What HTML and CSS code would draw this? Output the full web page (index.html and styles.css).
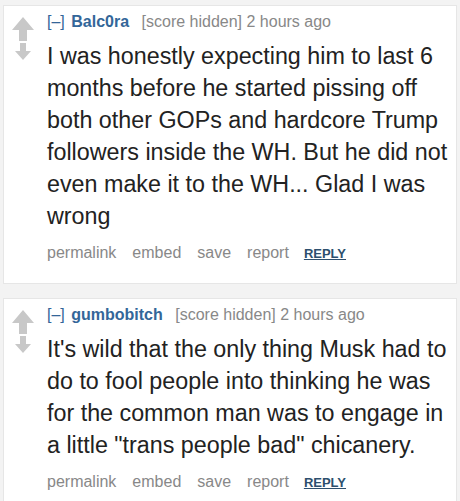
FILE: index.html
```html
<!DOCTYPE html>
<html lang="en">
<head>
  <meta charset="UTF-8" />
  <title>Comments</title>
  <link rel="stylesheet" href="styles.css">
</head>
<body>
  <div class="comment">
    <div class="votes">
      <svg class="up" width="22" height="24" viewBox="0 0 22 24"><path d="M11 0 L22 13 L15 13 L15 24 L7 24 L7 13 L0 13 Z" fill="#c8c8c8"/></svg>
      <svg class="down" width="16" height="17" viewBox="0 0 16 17"><path d="M5 0 L11 0 L11 8 L16 8 L8 17 L0 8 L5 8 Z" fill="#c8c8c8"/></svg>
    </div>
    <div class="entry">
      <p class="tagline">
        <a class="expand">[&ndash;]</a>
        <a class="author">Balc0ra</a>
        <span class="score">[score hidden]</span>
        <span class="time">2 hours ago</span>
      </p>
      <div class="md">I was honestly expecting him to last 6 months before he started pissing off both other GOPs and hardcore Trump followers inside the WH. But he did not even make it to the WH... Glad I was wrong</div>
      <ul class="buttons">
        <li>permalink</li>
        <li>embed</li>
        <li>save</li>
        <li>report</li>
        <li class="reply">REPLY</li>
      </ul>
    </div>
  </div>

  <div class="comment">
    <div class="votes">
      <svg class="up" width="22" height="24" viewBox="0 0 22 24"><path d="M11 0 L22 13 L15 13 L15 24 L7 24 L7 13 L0 13 Z" fill="#c8c8c8"/></svg>
      <svg class="down" width="16" height="17" viewBox="0 0 16 17"><path d="M5 0 L11 0 L11 8 L16 8 L8 17 L0 8 L5 8 Z" fill="#c8c8c8"/></svg>
    </div>
    <div class="entry">
      <p class="tagline">
        <a class="expand">[&ndash;]</a>
        <a class="author">gumbobitch</a>
        <span class="score">[score hidden]</span>
        <span class="time">2 hours ago</span>
      </p>
      <div class="md">It's wild that the only thing Musk had to do to fool people into thinking he was for the common man was to engage in a little "trans people bad" chicanery.</div>
      <ul class="buttons">
        <li>permalink</li>
        <li>embed</li>
        <li>save</li>
        <li>report</li>
        <li class="reply">REPLY</li>
      </ul>
    </div>
  </div>
</body>
</html>
```

FILE: styles.css
```css
body {
  font-family: "Liberation Sans", Arial, sans-serif;
  margin: 0;
  padding: 5px 3px 0;
  background-color: #f3f3f3;
}

.comment {
  display: flex;
  background-color: #fff;
  border: 1px solid #e6e6e6;
  margin-bottom: 14px;
  padding: 7px 0 20px 8px;
}

.votes {
  display: flex;
  flex-direction: column;
  align-items: center;
  width: 22px;
  padding-top: 4px;
}

.votes .down {
  margin-top: 2px;
}

.entry {
  flex: 1;
  padding-left: 13px;
}

.tagline {
  margin: 0;
  font-size: 16px;
  line-height: 18px;
  color: #888;
}

.expand {
  color: #369;
  margin-right: 2px;
}

.author {
  color: #336699;
  font-weight: bold;
  margin-right: 8px;
}

.time {
  color: #888;
}

.md {
  font-size: 23.3px;
  line-height: 32px;
  color: #222;
  margin-top: 9px;
}

.buttons {
  list-style: none;
  margin: 12px 0 0;
  padding: 0;
  display: flex;
  align-items: baseline;
  gap: 16px;
  font-size: 16px;
  line-height: 18px;
  color: #888;
}

.reply {
  font-size: 13px;
  font-weight: bold;
  color: #2d4f6e;
  text-decoration: underline;
  margin-left: -1px;
}
```
